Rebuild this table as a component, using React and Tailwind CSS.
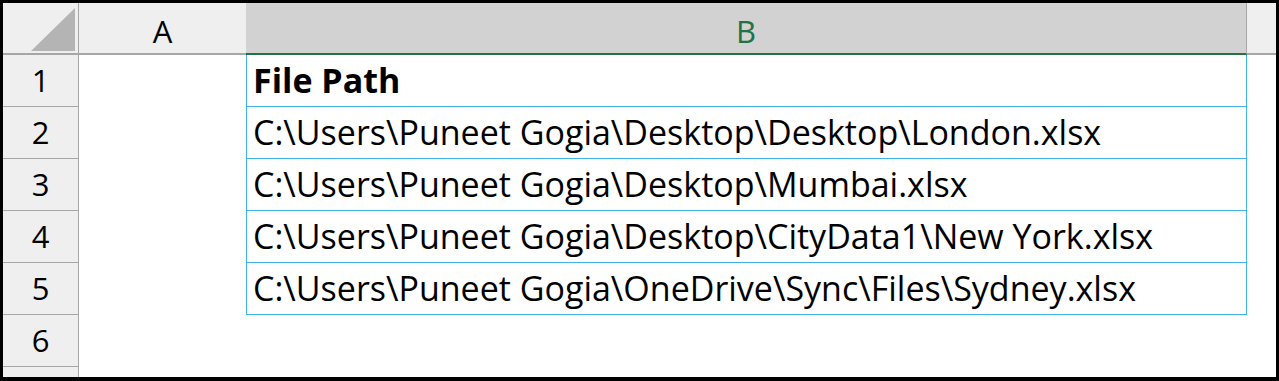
import React from 'react';

const rows = [
    { n: 1, text: 'File Path', bold: true },
    { n: 2, text: 'C:\\Users\\Puneet Gogia\\Desktop\\Desktop\\London.xlsx' },
    { n: 3, text: 'C:\\Users\\Puneet Gogia\\Desktop\\Mumbai.xlsx' },
    { n: 4, text: 'C:\\Users\\Puneet Gogia\\Desktop\\CityData1\\New York.xlsx' },
    { n: 5, text: 'C:\\Users\\Puneet Gogia\\OneDrive\\Sync\\Files\\Sydney.xlsx' },
];

function App() {
    return (
        <div className="w-[1279px] h-[381px] bg-black pt-[3px] pl-[3px] pr-[3px] pb-[4px] font-['Open_Sans',sans-serif]">
            <div className="w-full h-full bg-white overflow-hidden flex flex-col">
                {/* column headers */}
                <div className="flex h-[52px] shrink-0">
                    <div className="w-[76px] h-full bg-[#efefef] border-r border-r-[#a6a6a6] border-b-2 border-b-[#a6a6a6] flex items-end justify-end pr-[3px] pb-[1px]">
                        <svg width="44" height="44" viewBox="0 0 44 44">
                            <polygon points="0,43 44,43 44,0" fill="#b4b4b4" />
                        </svg>
                    </div>
                    <div className="w-[167px] h-full bg-[#efefef] border-b-2 border-b-[#a6a6a6] flex items-center justify-center pt-[6px] text-[31px] text-black">
                        A
                    </div>
                    <div className="w-[1001px] h-full bg-[#d2d2d2] border-r border-r-[#a6a6a6] border-b-2 border-b-[#217346] flex items-center justify-center pt-[6px] text-[31px] text-[#217346]">
                        B
                    </div>
                    <div className="flex-1 h-full bg-[#efefef] border-b-2 border-b-[#a6a6a6]"></div>
                </div>

                {rows.map(row => (
                    <div key={row.n} className="flex h-[52px] shrink-0">
                        <div className="w-[76px] h-full bg-[#efefef] border-r border-r-[#a6a6a6] border-b border-b-[#a6a6a6] flex items-center justify-center text-[31px] text-black">
                            {row.n}
                        </div>
                        <div className="w-[167px] h-full"></div>
                        <div className={`w-[1001px] h-full border-l border-r border-b border-[#41b4e6] flex items-center pl-[6px] text-[34px] text-black whitespace-nowrap ${row.bold ? 'font-bold' : ''}`}>
                            {row.text}
                        </div>
                        <div className="flex-1 h-full"></div>
                    </div>
                ))}

                <div className="flex h-[52px] shrink-0">
                    <div className="w-[76px] h-full bg-[#efefef] border-r border-r-[#a6a6a6] border-b border-b-[#a6a6a6] flex items-center justify-center text-[31px] text-black">
                        6
                    </div>
                    <div className="flex-1 h-full"></div>
                </div>
                <div className="flex flex-1">
                    <div className="w-[76px] h-full bg-[#efefef] border-r border-r-[#a6a6a6]"></div>
                    <div className="flex-1 h-full"></div>
                </div>
            </div>
        </div>
    );
}

export default App;
